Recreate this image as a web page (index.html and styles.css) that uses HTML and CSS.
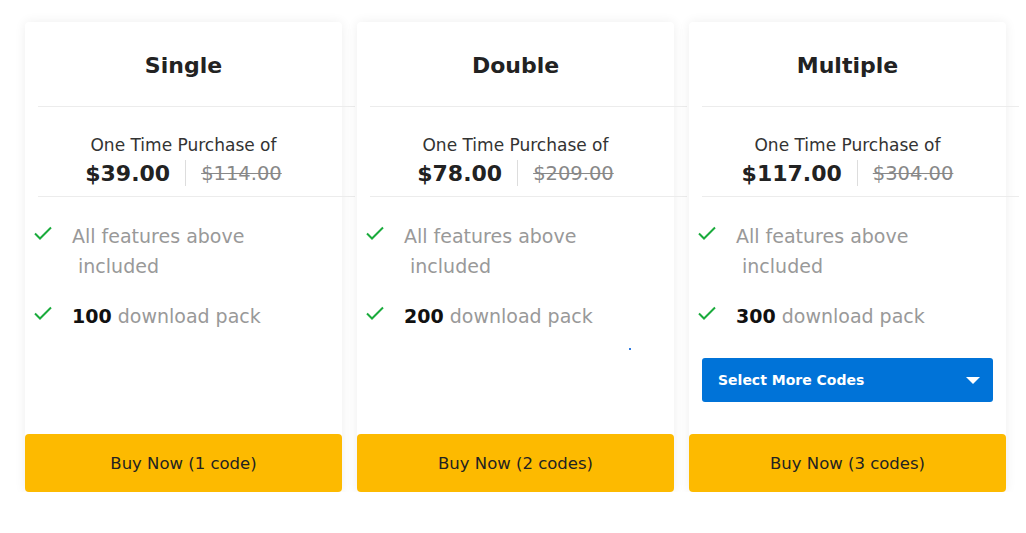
FILE: index.html
```html
<!DOCTYPE html>
<html>
<head>
<meta charset="utf-8">
<link rel="stylesheet" href="styles.css">
</head>
<body>
<div class="plans">
  <div class="card">
    <h2 class="title">Single</h2>
    <div class="rule"></div>
    <div class="price-box">
      <div class="once">One Time Purchase of</div>
      <div class="prices"><span class="now">$39.00</span><span class="sep"></span><span class="was">$114.00</span></div>
    </div>
    <div class="rule"></div>
    <ul class="features">
      <li><svg class="check" viewBox="0 0 18 14"><path d="M1 7.5l5 5L17 1.5"/></svg><span>All features above<br>&nbsp;included</span></li>
      <li><svg class="check" viewBox="0 0 18 14"><path d="M1 7.5l5 5L17 1.5"/></svg><span><b>100</b> download pack</span></li>
    </ul>
    <button class="buy">Buy Now (1 code)</button>
  </div>
  <div class="card">
    <h2 class="title">Double</h2>
    <div class="rule"></div>
    <div class="price-box">
      <div class="once">One Time Purchase of</div>
      <div class="prices"><span class="now">$78.00</span><span class="sep"></span><span class="was">$209.00</span></div>
    </div>
    <div class="rule"></div>
    <ul class="features">
      <li><svg class="check" viewBox="0 0 18 14"><path d="M1 7.5l5 5L17 1.5"/></svg><span>All features above<br>&nbsp;included</span></li>
      <li><svg class="check" viewBox="0 0 18 14"><path d="M1 7.5l5 5L17 1.5"/></svg><span><b>200</b> download pack</span></li>
    </ul>
    <span class="dot"></span>
    <button class="buy">Buy Now (2 codes)</button>
  </div>
  <div class="card">
    <h2 class="title">Multiple</h2>
    <div class="rule"></div>
    <div class="price-box">
      <div class="once">One Time Purchase of</div>
      <div class="prices"><span class="now">$117.00</span><span class="sep"></span><span class="was">$304.00</span></div>
    </div>
    <div class="rule"></div>
    <ul class="features">
      <li><svg class="check" viewBox="0 0 18 14"><path d="M1 7.5l5 5L17 1.5"/></svg><span>All features above<br>&nbsp;included</span></li>
      <li><svg class="check" viewBox="0 0 18 14"><path d="M1 7.5l5 5L17 1.5"/></svg><span><b>300</b> download pack</span></li>
    </ul>
    <div class="select"><span>Select More Codes</span><span class="caret"></span></div>
    <button class="buy">Buy Now (3 codes)</button>
  </div>
</div>
</body>
</html>
```

FILE: styles.css
```css
* { box-sizing: border-box; }
body {
  margin: 0;
  background: #fff;
  font-family: "DejaVu Sans", "Liberation Sans", sans-serif;
  color: #222;
}
.plans {
  display: flex;
  gap: 15px;
  padding: 22px 0 0 25px;
}
.card {
  position: relative;
  width: 317px;
  height: 470px;
  background: #fff;
  box-shadow: 0 0 12px rgba(0,0,0,0.07);
  border-radius: 4px;
  display: flex;
  flex-direction: column;
}
.title {
  margin: 0;
  height: 84px;
  display: flex;
  align-items: center;
  justify-content: center;
  font-size: 22px;
  font-weight: bold;
  color: #222;
  padding-top: 2px;
}
.rule {
  height: 1px;
  background: #ececec;
  margin-left: 13px;
  width: 317px;
  flex: none;
}
.price-box {
  height: 89px;
  display: flex;
  flex-direction: column;
  align-items: center;
  padding-top: 28px;
}
.once {
  font-size: 17px;
  color: #333;
  line-height: 20px;
}
.prices {
  display: flex;
  align-items: center;
  margin-top: 3px;
  height: 30px;
}
.now {
  font-size: 22px;
  font-weight: 600;
  color: #222;
}
.sep {
  width: 1px;
  height: 26px;
  background: #ddd;
  margin: 0 15px;
}
.was {
  font-size: 19.5px;
  color: #888;
  text-decoration: line-through;
}
.features {
  list-style: none;
  margin: 0;
  padding: 24px 0 0 9px;
}
.features li {
  display: flex;
  align-items: flex-start;
  font-size: 19px;
  line-height: 30px;
  color: #999;
  margin-bottom: 20px;
}
.features b {
  color: #111;
  font-weight: bold;
}
.check {
  flex: none;
  width: 18px;
  height: 14px;
  margin: 5px 20px 0 0;
  fill: none;
  stroke: #1aab3c;
  stroke-width: 2;
}
.dot {
  position: absolute;
  left: 272px;
  top: 326px;
  width: 2px;
  height: 2px;
  background: #2f7be0;
}
.select {
  margin: 7px 13px 0;
  height: 44px;
  background: #0073d8;
  border-radius: 3px;
  color: #fff;
  font-size: 14px;
  font-weight: bold;
  display: flex;
  align-items: center;
  justify-content: space-between;
  padding: 0 13px 0 16px;
}
.caret {
  width: 0;
  height: 0;
  border-left: 7px solid transparent;
  border-right: 7px solid transparent;
  border-top: 7px solid #fff;
}
.buy {
  margin-top: auto;
  height: 58px;
  width: 100%;
  border: none;
  border-radius: 4px;
  background: #fdba00;
  color: #222;
  font-family: inherit;
  font-size: 16.5px;
  font-weight: 500;
}
```
